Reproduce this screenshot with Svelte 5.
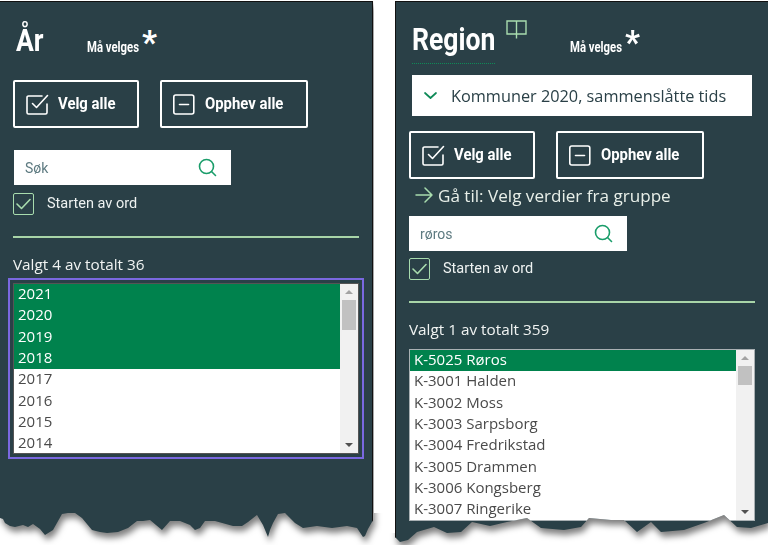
<script>
  const edgeLeft = [[373,0],[373,515],[375,516],[372,522],[368,529],[365,536],[363,537],[357,528],[347,526],[332,528],[317,526],[303,528],[295,523],[285,513],[278,514],[273,523],[270,530],[268,537],[263,525],[257,515],[248,522],[242,526],[233,526],[215,521],[205,521],[200,528],[195,530],[190,525],[180,521],[170,521],[162,530],[150,520],[143,521],[137,521],[128,528],[118,532],[107,533],[100,532],[92,530],[82,518],[75,513],[68,513],[62,514],[53,530],[45,535],[40,529],[33,524],[28,527],[23,525],[15,527],[10,526],[5,523],[3,519],[0,518],[0,0]];
  const edgeRight = [[768,0],[768,523],[751,528],[737,527],[724,515],[704,523],[684,530],[661,532],[651,522],[637,532],[624,520],[611,520],[589,518],[581,527],[564,530],[541,528],[527,518],[507,522],[490,526],[472,522],[461,532],[447,533],[434,527],[417,532],[408,540],[400,542],[395,537],[395,0]];
  const clip = (pts, ox) => 'clip-path: polygon(' + pts.map(([x, y]) => `${x - ox}px ${y - 1}px`).join(',') + ')';
  const years = ['2021','2020','2019','2018','2017','2016','2015','2014'];
  const regions = ['K-5025 Røros','K-3001 Halden','K-3002 Moss','K-3003 Sarpsborg','K-3004 Fredrikstad','K-3005 Drammen','K-3006 Kongsberg','K-3007 Ringerike'];
</script>

{#snippet buttons()}
  <div class="buttons">
    <button class="btn first">
      <svg width="23" height="23" viewBox="0 0 23 23" fill="none" stroke="#fff" stroke-width="1.6" stroke-linecap="round" stroke-linejoin="round"><path d="M21 11v8.5a1.5 1.5 0 0 1-1.5 1.5h-17A1.5 1.5 0 0 1 1 19.500v-15A1.500 1.500 0 0 1 2.500 3H16"/><path d="M6.500 10.500l4 4L21.500 2.500"/></svg>
      <span class="cond">Velg alle</span>
    </button>
    <button class="btn second">
      <svg width="22" height="21" viewBox="0 0 22 21" fill="none" stroke="#fff" stroke-width="1.6" stroke-linecap="round" stroke-linejoin="round"><rect x="0.800" y="1" width="20" height="19" rx="2"/><path d="M6.500 10.500h9"/></svg>
      <span class="cond">Opphev alle</span>
    </button>
  </div>
{/snippet}

{#snippet search(value, placeholder)}
  <div class="search">
    <span class={value ? 'val' : 'ph'}>{value || placeholder}</span>
    <svg width="19" height="19" viewBox="0 0 19 19" fill="none" stroke="#1a9d6a" stroke-width="1.6" stroke-linecap="round"><circle cx="8.500" cy="8.500" r="7"/><path d="M13.500 13.500l4 4"/></svg>
  </div>
  <label class="check">
    <span class="box"><svg width="15" height="12" viewBox="0 0 15 12" fill="none" stroke="#a8dcae" stroke-width="1.600" stroke-linecap="round" stroke-linejoin="round"><path d="M1 6l4.500 4.500L14 1.500"/></svg></span>
    <span class="lab">Starten av ord</span>
  </label>
  <div class="rule"></div>
{/snippet}

{#snippet list(items, selected, focused, thumb)}
  <div class="list" class:focused>
    <div class="rows">
      {#each items as item, i}
        <div class="row" class:sel={i < selected}>{item}</div>
      {/each}
    </div>
    <div class="bar">
      <span class="arrow up"></span>
      <div class="track"><div class="thumb" style="height:{thumb}px"></div></div>
      <span class="arrow down"></span>
    </div>
  </div>
{/snippet}

<div class="page">
  <div class="shade sl">
    <section class="panel left" style={clip(edgeLeft, 0)}>
      <header class="head tall">
        <h2 class="short"><span class="title">År</span></h2>
        <span class="must">Må velges</span>
        <span class="star">*</span>
      </header>
      {@render buttons()}
      <div class="gap22"></div>
      {@render search('', 'Søk')}
      <p class="count">Valgt 4 av totalt 36</p>
      {@render list(years, 4, true, 30)}
    </section>
  </div>
  <div class="shade sr">
    <section class="panel right" style={clip(edgeRight, 395)}>
      <header class="head">
        <h2 class="long"><span class="title">Region</span></h2>
        <svg class="book" width="21" height="19" viewBox="0 0 21 19" fill="none" stroke="#a8dcae" stroke-width="1.400"><path d="M1 1h9.500v13H1zM10.500 1H20v13h-9.500zM10.500 14v4.500"/></svg>
        <span class="must rmust">Må velges</span>
        <span class="star">*</span>
      </header>
      <div class="drop">
        <svg width="13" height="7" viewBox="0 0 13 7" fill="none" stroke="#0f8a58" stroke-width="1.700" stroke-linecap="round" stroke-linejoin="round"><path d="M1 1l5.500 5L12 1"/></svg>
        <span>Kommuner 2020, sammenslåtte tids</span>
      </div>
      {@render buttons()}
      <div class="goto">
        <svg width="18" height="16" viewBox="0 0 18 16" fill="none" stroke="#a8dcae" stroke-width="1.500" stroke-linecap="round" stroke-linejoin="round"><path d="M1 8h16M10 1l7 7-7 7"/></svg>
        <span>Gå til: Velg verdier fra gruppe</span>
      </div>
      {@render search('røros', '')}
      <p class="count">Valgt 1 av totalt 359</p>
      {@render list(regions, 1, false, 19)}
    </section>
  </div>
</div>

<style>
  :global(body) { margin: 0; background: #fff; overflow: hidden; }
  .page { display: flex; gap: 22px; width: 768px; height: 545px; padding-top: 1px; box-sizing: border-box; overflow: hidden; }
  .shade { filter: drop-shadow(2px 5px 3px rgba(0,0,0,.5)); }
  .sl { clip-path: polygon(0 0, 374px 0, 374px 512px, 400px 512px, 400px 560px, 0 560px); }
  .sr { clip-path: polygon(0 0, 400px 0, 400px 560px, -20px 560px, -20px 532px, 0 532px); }
  .panel { width: 373px; height: 544px; box-sizing: border-box; background: #2a4047; border-top: 1px solid #111; padding-left: 13px; color: #fff; font-family: Roboto, sans-serif; }
  .left { border-right: 1px solid #111; }
  .right { border-left: 1px solid #111; }
  .head { display: flex; align-items: flex-start; height: 73px; margin-left: 4px; }
  .head.tall { height: 78px; margin-left: 3px; }
  h2 { margin: 20px 0 0; font: 700 32px/36px Roboto, sans-serif; height: 36px; }
  h2.short { width: 71px; }
  h2.long { width: 83px; border-bottom: 1px dotted #0f8a58; height: 42px; margin-top: 19px; margin-left: -1px; }
  .title { display: inline-block; transform: scaleX(.83); transform-origin: left center; white-space: nowrap; }
  .must { margin-top: 38px; width: 56px; font-weight: 700; font-size: 14px; line-height: 15px; white-space: nowrap; transform: scaleX(.81); transform-origin: left center; }
  .star { margin: 21px 0 0 -1px; font-weight: 700; font-size: 33px; line-height: 40px; }
  .book { margin: 18px 0 0 11px; flex: none; }
  .rmust { margin-left: 43px; }
  .drop { display: flex; align-items: center; gap: 14px; width: 340px; height: 41px; margin-left: 3px; padding-left: 12px; box-sizing: border-box; background: #fff; color: #2a4047; font: 16.300px "Open Sans", sans-serif; white-space: nowrap; margin-bottom: 15px; }
  .buttons { display: flex; gap: 21px; }
  .btn { display: flex; align-items: center; height: 48px; padding: 0 0 0 11px; box-sizing: border-box; background: none; border: 2px solid #fff; border-radius: 2px; color: #fff; font: 700 17px Roboto, sans-serif; }
  .first { width: 126px; }
  .second { width: 148px; }
  .btn svg { flex: none; margin-right: 9px; }
  .second svg { margin-right: 10px; }
  .cond { display: inline-block; white-space: nowrap; transform: scaleX(.875); transform-origin: left center; position: relative; top: -1px; }
  .gap22 { height: 22px; }
  .goto { display: flex; align-items: center; gap: 5px; height: 24px; margin: 4px 0 9px 6px; font: 17.100px "Open Sans", sans-serif; color: #e8efe9; }
  .search { display: flex; align-items: center; justify-content: space-between; width: 217px; height: 35px; margin-left: 1px; padding: 0 14px 0 11px; box-sizing: border-box; background: #fff; font-size: 14px; }
  .right .search { margin-left: 0; width: 218px; }
  .right .check { margin-top: 7px; }
  .ph, .val { color: #5d7a80; }
  .check { display: flex; align-items: center; gap: 13px; height: 22px; margin-top: 8px; font-size: 14.500px; color: #eef2f1; }
  .lab { margin-top: -2px; }
  .box { display: flex; align-items: center; justify-content: center; width: 21px; height: 22px; box-sizing: border-box; border: 1px solid #a8dcae; border-radius: 2px; }
  .rule { width: 346px; height: 2px; margin-top: 21px; background: #a8d5a8; }
  .count { margin: 16px 0 9px; font: 15.300px/20px "Open Sans", sans-serif; color: #f0f3f2; }
  .right .count { margin-bottom: 10px; }
  .list { display: flex; width: 346px; height: 172px; box-sizing: border-box; border: 1px solid #a9b0b3; background: #fff; font: 15px/18.500px "Open Sans", sans-serif; color: #4a4a4a; }
  .list.focused { border-color: #555; outline: 2px solid #7a68e0; outline-offset: 3px; height: 171px; }
  .rows { flex: 1; }
  .row { height: 21.330px; padding-left: 4px; }
  .row.sel { background: #00824d; color: #fff; }
  .bar { display: flex; flex-direction: column; align-items: center; width: 18px; background: #f1f1f1; }
  .arrow { flex: none; width: 0; height: 0; border-left: 4px solid transparent; border-right: 4px solid transparent; margin: 6px 0; }
  .up { border-bottom: 4px solid #a3a3a3; }
  .down { border-top: 4px solid #505050; }
  .track { flex: 1; width: 100%; }
  .thumb { width: 14px; margin: 0 auto; background: #c1c1c1; }
</style>
